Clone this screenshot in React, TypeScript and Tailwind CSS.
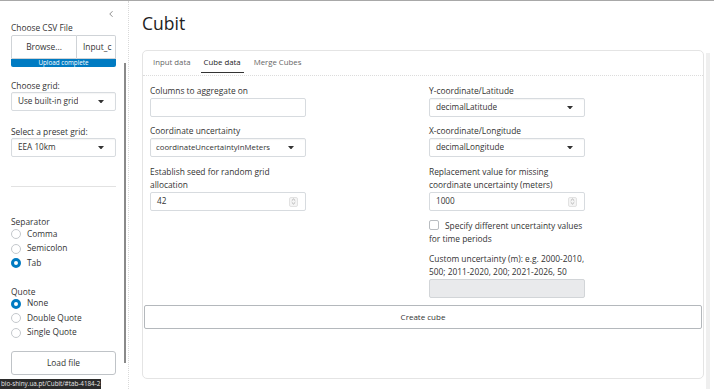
import { ChevronLeft } from "lucide-react";

const font = { fontFamily: '"Open Sans", "Liberation Sans", sans-serif' };

type RadioProps = { label: string; checked?: boolean };

const Radio = ({ label, checked }: RadioProps) => (
  <div className="flex items-center h-[14.5px] gap-[6px]">
    {checked ? (
      <span className="w-[10px] h-[10px] rounded-full border-[3px] border-[#007bc2] bg-white" />
    ) : (
      <span className="w-[10px] h-[10px] rounded-full border border-[#c4c8cc] bg-white" />
    )}
    <span className="text-[8.4px] text-[#333]">{label}</span>
  </div>
);

const Caret = () => (
  <svg width="6" height="3.5" viewBox="0 0 7 4" className="shrink-0">
    <path d="M0 0 L7 0 L3.5 4 Z" fill="#333" />
  </svg>
);

type SelectProps = { value: string; width: string; size?: string; pl?: string };

const Select = ({ value, width, size = "text-[8.2px]", pl = "pl-[6px]" }: SelectProps) => (
  <div
    className={`${width} h-[19px] border border-[#d7dbdf] rounded-[2px] bg-white flex items-center justify-between ${pl} pr-[11px] shadow-[inset_0_1px_1px_rgba(0,0,0,0.04)]`}
  >
    <span className={`${size} text-[#333] truncate`}>{value}</span>
    <Caret />
  </div>
);

const Spinner = () => (
  <div className="w-[9px] h-[10px] rounded-[2px] border border-[#e2e2e2] bg-[#f4f4f4] flex flex-col items-center justify-center">
    <svg width="5" height="7" viewBox="0 0 5 7">
      <path d="M0.8 2.6 L2.5 1 L4.2 2.6 M0.8 4.4 L2.5 6 L4.2 4.4" stroke="#999" strokeWidth="0.7" fill="none" />
    </svg>
  </div>
);

const Label = ({ children }: { children: React.ReactNode }) => (
  <div className="text-[8.4px] leading-[13px] text-[#333]">{children}</div>
);

const SideLabel = ({ children, mt }: { children: React.ReactNode; mt: string }) => (
  <div className={`text-[8.4px] leading-[13px] text-[#333] ${mt}`}>{children}</div>
);

const App = () => {
  return (
    <div
      className="relative w-[714px] h-[389px] overflow-hidden bg-white border-t border-[#a8a8a8] flex"
      style={font}
    >
      {/* sidebar */}
      <div className="w-[129px] h-full flex border-r border-dotted border-[#d9d9d9] shrink-0">
        <div className="w-[116px] pl-[11px] flex flex-col">
          <div className="flex justify-end pt-[8px] pr-0 h-[20px]">
            <ChevronLeft size={10} strokeWidth={1.6} className="text-[#555]" />
          </div>
          <SideLabel mt="mt-0">Choose CSV File</SideLabel>
          <div className="mt-[1px] flex h-[24px]">
            <div className="w-[66px] h-full border border-[#cfd3d7] rounded-tl-[2px] flex items-center justify-center text-[8.4px] text-[#333]">
              Browse...
            </div>
            <div className="flex-1 h-full border border-l-0 border-[#cfd3d7] rounded-tr-[2px] flex items-center pl-[6px] text-[8.4px] text-[#333] overflow-hidden whitespace-nowrap">
              Input_c
            </div>
          </div>
          <div className="h-[8px] bg-[#007bc2] rounded-b-[2px] flex items-center justify-center text-[6.3px] leading-none text-white">
            Upload complete
          </div>
          <SideLabel mt="mt-[12px]">Choose grid:</SideLabel>
          <Select value="Use built-in grid" width="w-[105px]" />
          <SideLabel mt="mt-[14px]">Select a preset grid:</SideLabel>
          <Select value="EEA 10km" width="w-[105px]" />
          <div className="mt-[29px] border-t border-[#e2e2e2] w-[105px]" />
          <SideLabel mt="mt-[28px]">Separator</SideLabel>
          <div className="-mt-[1px]">
            <Radio label="Comma" />
            <Radio label="Semicolon" />
            <Radio label="Tab" checked />
          </div>
          <SideLabel mt="mt-[14px]">Quote</SideLabel>
          <div className="-mt-[1px]">
            <Radio label="None" checked />
            <Radio label="Double Quote" />
            <Radio label="Single Quote" />
          </div>
          <div className="mt-[11px] w-[105px] h-[24px] border border-[#bfc3c7] rounded-[3px] flex items-center justify-center text-[8.4px] text-[#333]">
            Load file
          </div>
        </div>
        <div className="flex-1 flex justify-end pr-[2px]">
          <div className="mt-[62px] w-[2px] h-[300px] bg-[#8a8a8a]" />
        </div>
      </div>

      {/* main */}
      <div className="flex-1 pl-[13px] flex flex-col">
        <div className="text-[17.5px] leading-[24px] text-[#222] mt-[10px]">Cubit</div>
        <div className="mt-[15px] w-[562px] h-[329px] border border-[#e4e4e4] rounded-[5px] flex flex-col">
          <div className="h-[25px] border-b border-dotted border-[#dcdcdc] flex items-stretch pl-[10px] gap-[13px] text-[7.8px] text-[#666]">
            <div className="flex items-center">Input data</div>
            <div className="relative flex items-center text-[#222] px-[3px] -mx-[3px]">
              Cube data
              <div className="absolute left-0 right-0 bottom-[2px] h-[1px] bg-[#333]" />
            </div>
            <div className="flex items-center">Merge Cubes</div>
          </div>
          <div className="px-[7px] pt-[8px] grid grid-cols-[279px_1fr]">
            <div className="flex flex-col">
              <Label>Columns to aggregate on</Label>
              <div className="mt-[1px] w-[156px] h-[19px] border border-[#d7dbdf] rounded-[2px]" />
              <div className="mt-[7px]">
                <Label>Coordinate uncertainty</Label>
              </div>
              <div className="mt-[1px]">
                <Select value="coordinateUncertaintyInMeters" width="w-[156px]" size="text-[7.8px]" pl="pl-[5px]" />
              </div>
              <div className="mt-[8px]">
                <Label>
                  Establish seed for random grid
                  <br />
                  allocation
                </Label>
              </div>
              <div className="mt-[1px] w-[156px] h-[19px] border border-[#d7dbdf] rounded-[2px] flex items-center justify-between pl-[6px] pr-[7px] text-[8.2px] text-[#333]">
                42
                <Spinner />
              </div>
            </div>
            <div className="flex flex-col">
              <Label>Y-coordinate/Latitude</Label>
              <div className="mt-[1px]">
                <Select value="decimalLatitude" width="w-[156px]" />
              </div>
              <div className="mt-[7px]">
                <Label>X-coordinate/Longitude</Label>
              </div>
              <div className="mt-[1px]">
                <Select value="decimalLongitude" width="w-[156px]" />
              </div>
              <div className="mt-[8px]">
                <Label>
                  Replacement value for missing
                  <br />
                  coordinate uncertainty (meters)
                </Label>
              </div>
              <div className="mt-[1px] w-[156px] h-[19px] border border-[#d7dbdf] rounded-[2px] flex items-center justify-between pl-[6px] pr-[7px] text-[8.2px] text-[#333]">
                1000
                <Spinner />
              </div>
              <div className="mt-[8px] flex items-start">
                <span className="mt-[1px] w-[10px] h-[10px] border border-[#b9bdc1] rounded-[2px] shrink-0 mr-[6px]" />
                <Label>Specify different uncertainty values</Label>
              </div>
              <Label>for time periods</Label>
              <div className="mt-[7px]">
                <Label>
                  Custom uncertainty (m): e.g. 2000-2010,
                  <br />
                  500; 2011-2020, 200; 2021-2026, 50
                </Label>
              </div>
              <div className="mt-[1px] w-[156px] h-[19px] border border-[#d2d5d8] rounded-[2px] bg-[#e9eaec]" />
            </div>
          </div>
          <div className="mx-[1px] mt-[7px] h-[24px] border border-[#b4b8bc] rounded-[2px] flex items-center justify-center text-[8px] text-[#333]">
            Create cube
          </div>
        </div>
      </div>

      {/* right edge strip */}
      <div className="w-[8px] h-full pt-[52px]">
        <div className="w-[4px] h-full bg-[#efefef]" />
      </div>

      {/* status bar url */}
      <div className="absolute left-0 bottom-0 h-[10px] bg-[#2b2b2b] text-[#e6e6e6] text-[6.3px] leading-[10px] px-[1px]">
        bio-shiny.ua.pt/Cubit/#tab-4184-2
      </div>
    </div>
  );
};

export default App;
